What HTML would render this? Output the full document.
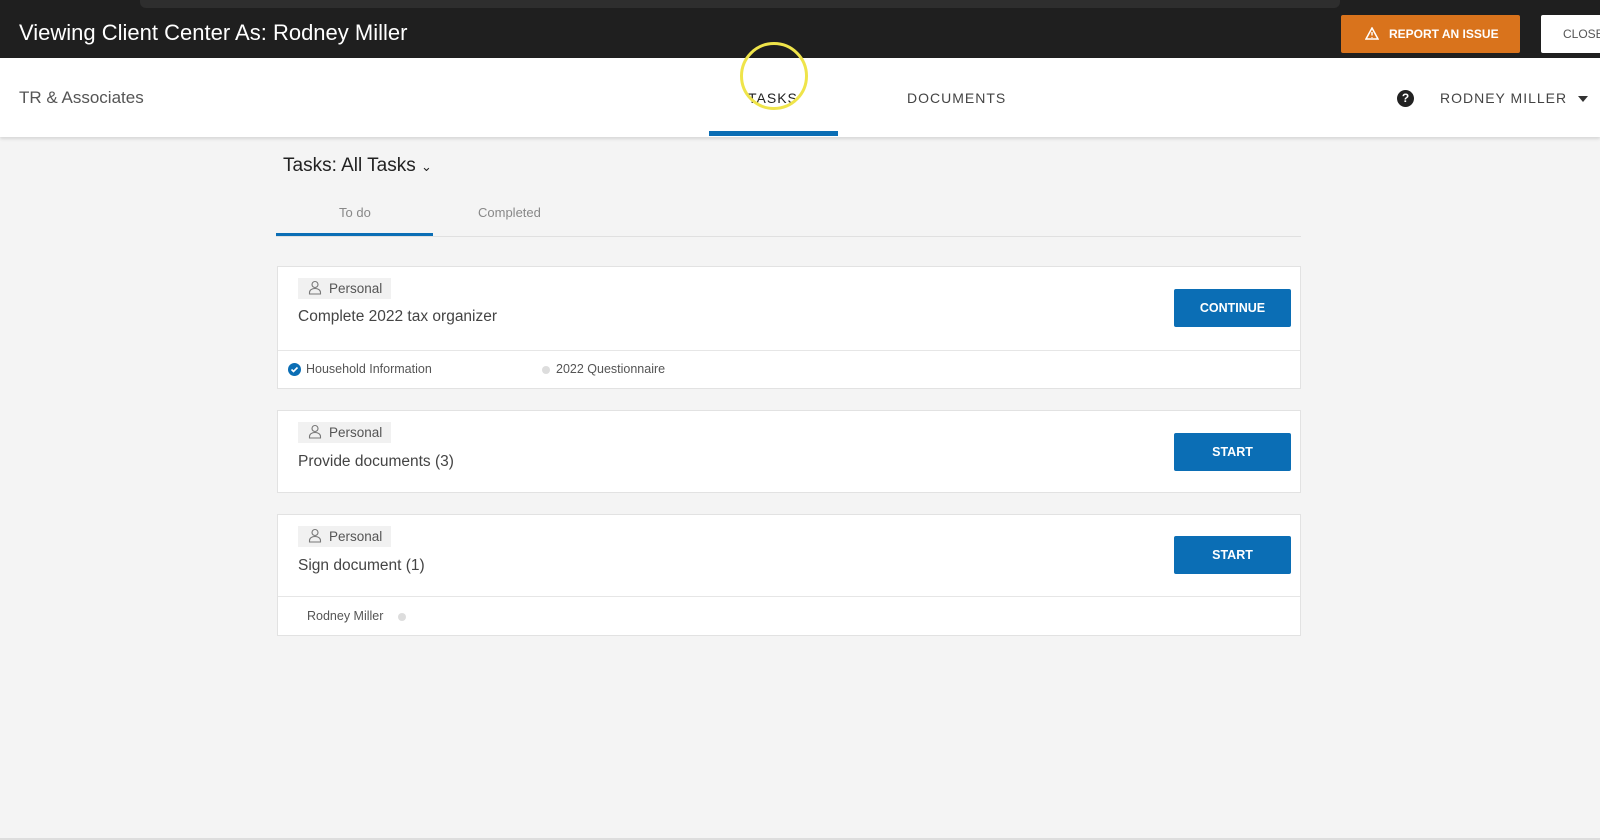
<!DOCTYPE html>
<html><head><style>
*{box-sizing:border-box;margin:0;padding:0}
body{width:1600px;height:840px;background:#f4f4f4;font-family:"Liberation Sans",sans-serif;position:relative;overflow:hidden;color:#333}
.abs{position:absolute}
.top{left:0;top:0;width:1600px;height:58px;background:#1f1f1f}
.strip{left:140px;top:0;width:1200px;height:8px;background:#2e2e2e;border-radius:0 0 6px 6px}
.nav{left:0;top:58px;width:1600px;height:79px;background:#fff;box-shadow:0 2px 3px rgba(0,0,0,.12)}
.card{background:#fff;border:1px solid #e2e2e2;left:277px;width:1024px}
.chip{background:#f1f1f1;height:21px;width:93px;font-size:13.5px;color:#555;padding:3px 0 0 31px}
.btn{background:#0b6eb5;color:#fff;font-weight:bold;font-size:12.5px;text-align:center;width:117px;height:38px;line-height:38px;border-radius:2px;left:896px}
.title{font-size:15.5px;color:#444;left:20px}
</style></head><body>
<div class="abs top"></div>
<div class="abs strip"></div>
<div class="abs" style="left:19px;top:20px;font-size:22px;color:#fff">Viewing Client Center As: Rodney Miller</div>
<div class="abs" style="left:1341px;top:15px;width:179px;height:38px;background:#d9731c;border-radius:2px;color:#fff;font-size:12px;font-weight:bold;line-height:38px;padding-left:28px">
<svg class="abs" style="left:24px;top:12px" width="14" height="13" viewBox="0 0 14 13"><path d="M7 1L13 12H1Z" fill="none" stroke="#fff" stroke-width="1.5"/><path d="M7 5v3.5M7 10v.8" stroke="#fff" stroke-width="1.4"/></svg>
<span style="margin-left:20px">REPORT AN ISSUE</span></div>
<div class="abs" style="left:1541px;top:15px;width:70px;height:38px;background:#fff;border-radius:2px;color:#555;font-size:12px;line-height:38px;padding-left:22px">CLOSE</div>
<div class="abs nav"></div>
<div class="abs" style="left:19px;top:88px;font-size:17px;color:#555">TR &amp; Associates</div>
<div class="abs" style="left:748px;top:90px;font-size:14px;letter-spacing:1px;color:#222">TASKS</div>
<div class="abs" style="left:740px;top:42px;width:68px;height:68px;border:3px solid #efe44a;border-radius:50%"></div>
<div class="abs" style="left:709px;top:131px;width:129px;height:5px;background:#0b6eb5"></div>
<div class="abs" style="left:907px;top:90px;font-size:14px;letter-spacing:1px;color:#444">DOCUMENTS</div>
<div class="abs" style="left:1397px;top:90px;width:17px;height:17px;border-radius:50%;background:#222;color:#fff;font-size:12px;font-weight:bold;text-align:center;line-height:17px">?</div>
<div class="abs" style="left:1440px;top:90px;font-size:14px;letter-spacing:1px;color:#444">RODNEY MILLER</div>
<div class="abs" style="left:1578px;top:96px;border-left:5px solid transparent;border-right:5px solid transparent;border-top:6px solid #333"></div>
<div class="abs" style="left:283px;top:155px;font-size:19px;color:#222">Tasks: All Tasks <span style="font-size:13px">&#8964;</span></div>
<div class="abs" style="left:276px;top:236px;width:1025px;height:1px;background:#e0e0e0"></div>
<div class="abs" style="left:276px;top:233px;width:157px;height:3px;background:#0b6eb5"></div>
<div class="abs" style="left:339px;top:205px;font-size:13px;color:#888">To do</div>
<div class="abs" style="left:478px;top:205px;font-size:13px;color:#888">Completed</div>

<div class="abs card" style="top:266px;height:123px">
<div class="abs chip" style="left:20px;top:11px">Personal</div>
<svg class="abs" style="left:30px;top:13px" width="14" height="15" viewBox="0 0 14 15"><circle cx="7" cy="4.5" r="3" fill="none" stroke="#777" stroke-width="1.1"/><path d="M1.5 14v-1.5c0-2.5 2.5-4 5.5-4s5.5 1.5 5.5 4V14Z" fill="none" stroke="#777" stroke-width="1.1"/></svg>
<div class="abs title" style="top:41px">Complete 2022 tax organizer</div>
<div class="abs btn" style="top:22px">CONTINUE</div>
<div class="abs" style="left:0;top:83px;width:1022px;height:1px;background:#e6e6e6"></div>
<div class="abs" style="left:10px;top:96px;width:13px;height:13px;border-radius:50%;background:#0b6eb5"></div>
<svg class="abs" style="left:12px;top:98px" width="9" height="9"><path d="M1.5 4.5l2 2 4-4" fill="none" stroke="#fff" stroke-width="1.6"/></svg>
<div class="abs" style="left:28px;top:95px;font-size:12.5px;color:#555">Household Information</div>
<div class="abs" style="left:264px;top:99px;width:8px;height:8px;border-radius:50%;background:#ddd"></div>
<div class="abs" style="left:278px;top:95px;font-size:12.5px;color:#555">2022 Questionnaire</div>
</div>

<div class="abs card" style="top:410px;height:83px">
<div class="abs chip" style="left:20px;top:11px">Personal</div>
<svg class="abs" style="left:30px;top:13px" width="14" height="15" viewBox="0 0 14 15"><circle cx="7" cy="4.5" r="3" fill="none" stroke="#777" stroke-width="1.1"/><path d="M1.5 14v-1.5c0-2.5 2.5-4 5.5-4s5.5 1.5 5.5 4V14Z" fill="none" stroke="#777" stroke-width="1.1"/></svg>
<div class="abs title" style="top:42px">Provide documents (3)</div>
<div class="abs btn" style="top:22px">START</div>
</div>

<div class="abs card" style="top:514px;height:122px">
<div class="abs chip" style="left:20px;top:11px">Personal</div>
<svg class="abs" style="left:30px;top:13px" width="14" height="15" viewBox="0 0 14 15"><circle cx="7" cy="4.5" r="3" fill="none" stroke="#777" stroke-width="1.1"/><path d="M1.5 14v-1.5c0-2.5 2.5-4 5.5-4s5.5 1.5 5.5 4V14Z" fill="none" stroke="#777" stroke-width="1.1"/></svg>
<div class="abs title" style="top:42px">Sign document (1)</div>
<div class="abs btn" style="top:21px">START</div>
<div class="abs" style="left:0;top:81px;width:1022px;height:1px;background:#e6e6e6"></div>
<div class="abs" style="left:29px;top:94px;font-size:12.5px;color:#555">Rodney Miller</div>
<div class="abs" style="left:120px;top:98px;width:8px;height:8px;border-radius:50%;background:#ddd"></div>
</div>
<div class="abs" style="left:0;top:838px;width:1600px;height:2px;background:#ddd"></div>
</body></html>
